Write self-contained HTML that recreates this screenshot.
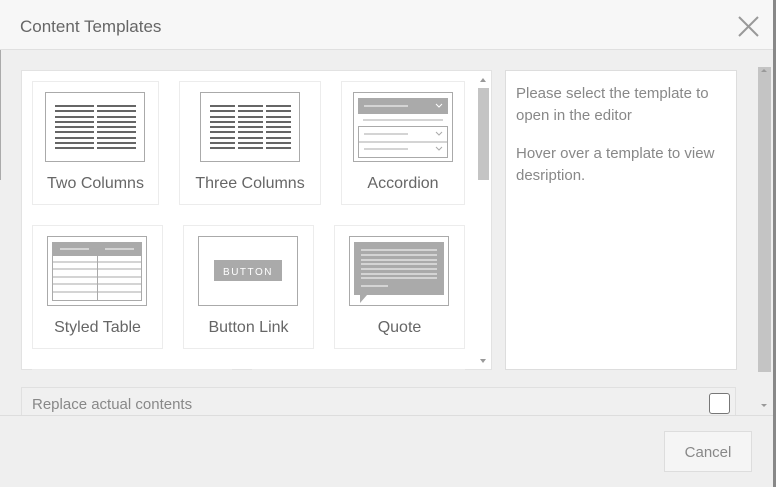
<!DOCTYPE html>
<html><head><style>
body{margin:0;width:776px;height:487px;overflow:hidden;background:#efefef;font-family:"Liberation Sans",sans-serif;position:relative}
.a{position:absolute}
.t{position:absolute;color:#666;font-size:16px;text-align:center;font-weight:300}
</style></head><body>
<div class="a" style="left:0;top:0;width:773px;height:49px;background:#f7f7f7;border-bottom:1px solid #e0e0e0"></div>
<div class="a" style="left:20px;top:17px;font-size:17px;color:#666">Content Templates</div>
<div class="a" style="left:773px;top:0;width:3px;height:487px;background:#888"></div>
<div class="a" style="left:0;top:50px;width:1px;height:130px;background:#aaa"></div>
<div class="a" style="left:21px;top:70px;width:471px;height:300px;background:#fff;border:1px solid #e2e2e2;box-sizing:border-box"></div>
<div class="a" style="left:478px;top:88px;width:11px;height:92px;background:#c4c4c4"></div>
<div class="a" style="left:505px;top:70px;width:232px;height:300px;background:#fff;border:1px solid #ddd;box-sizing:border-box"></div>
<div class="a" style="left:516px;top:83px;width:215px;font-size:15px;line-height:22px;color:#888">Please select the template to open in the editor<div style="height:16px"></div>Hover over a template to view desription.</div>
<div class="a" style="left:758px;top:67px;width:13px;height:305px;background:#c4c4c4"></div>
<div class="a" style="left:21px;top:387px;width:715px;height:28px;background:#f0f0f0;border:1px solid #e0e0e0;border-bottom:none;box-sizing:border-box"></div>
<div class="a" style="left:32px;top:396px;font-size:15px;color:#888">Replace actual contents</div>
<div class="a" style="left:709px;top:393px;width:21px;height:21px;background:#fff;border:1px solid #777;border-radius:3px;box-sizing:border-box"></div>
<div class="a" style="left:0;top:415px;width:773px;height:1px;background:#ddd"></div>
<div class="a" style="left:664px;top:431px;width:88px;height:41px;background:#f5f5f5;border:1px solid #ddd;box-sizing:border-box;text-align:center;line-height:42px;color:#888;font-size:15px">Cancel</div>
<svg class="a" style="left:0;top:0" width="776" height="487">
<g stroke="#999" stroke-width="2"><path d="M739 17L758 36M758 17L739 36"/></g>
<g fill="#999"><path d="M480 82l3-4 3 4z"/><path d="M480 359l3 4 3-4z"/><path d="M761 72l3-3 3 3z"/><path d="M761 404l3 3 3-3z"/></g>
<g fill="#fff" stroke="#ececec"><rect x="32.5" y="81.5" width="126" height="123"/><rect x="179.5" y="81.5" width="141" height="123"/><rect x="341.5" y="81.5" width="123" height="123"/><rect x="32.5" y="225.5" width="130" height="123"/><rect x="183.5" y="225.5" width="130" height="123"/><rect x="334.5" y="225.5" width="130" height="123"/><path d="M32.5 370V369.5H231.5V370M252.5 370V369.5H464.5V370"/></g>
<g fill="none" stroke="#aaa"><rect x="45.5" y="92.5" width="99" height="69"/><rect x="200.5" y="92.5" width="99" height="69"/><rect x="353.5" y="92.5" width="99" height="69"/><rect x="47.5" y="236.5" width="99" height="69"/><rect x="198.5" y="236.5" width="99" height="69"/><rect x="349.5" y="236.5" width="99" height="69"/></g>
<g stroke="#666" stroke-width="2">
<path d="M55 106H94M97 106H136M55 111H94M97 111H136M55 117H94M97 117H136M55 122H94M97 122H136M55 127H94M97 127H136M55 132H94M97 132H136M55 138H94M97 138H136M55 143H94M97 143H136M55 148H94M97 148H136"/>
<path d="M210 106H235M238 106H263M266 106H291M210 111H235M238 111H263M266 111H291M210 117H235M238 117H263M266 117H291M210 122H235M238 122H263M266 122H291M210 127H235M238 127H263M266 127H291M210 132H235M238 132H263M266 132H291M210 138H235M238 138H263M266 138H291M210 143H235M238 143H263M266 143H291M210 148H235M238 148H263M266 148H291"/>
</g>
<rect x="358" y="98" width="90" height="16" fill="#aaa"/>
<g stroke="#fff" fill="none"><path d="M364 106H408"/><path d="M436 104l3 3 3-3"/></g>
<g stroke="#aaa" fill="none"><path d="M363 120H443"/><rect x="358.5" y="126.5" width="89" height="31"/><path d="M358 142H448M364 134H408M364 149H408M436 132l3 3 3-3M436 147l3 3 3-3"/></g>
<rect x="52" y="242" width="90" height="14" fill="#aaa"/>
<g stroke="#fff"><path d="M60 249H89M105 249H134"/></g>
<g stroke="#aaa" fill="none"><path d="M52.5 256V300.5H141.5V256M52 262H142M52 269H142M52 277H142M52 284H142M52 292H142M97.5 256V300"/></g>
<rect x="214" y="260" width="68" height="21" fill="#aaa"/>
<text x="248" y="275" fill="#fff" font-size="10" text-anchor="middle" letter-spacing="1.5" font-family="Liberation Sans">BUTTON</text>
<path d="M354 242H444V295H367L360 303V295H354Z" fill="#aaa"/>
<g stroke="#fff"><path d="M361 250H437M361 255H437M361 260H437M361 264H437M361 269H437M361 274H437M361 278H437M361 286H388"/></g>
</svg>
<div class="t" style="left:32px;top:175px;width:127px">Two Columns</div>
<div class="t" style="left:179px;top:175px;width:142px">Three Columns</div>
<div class="t" style="left:341px;top:175px;width:124px">Accordion</div>
<div class="t" style="left:32px;top:319px;width:131px">Styled Table</div>
<div class="t" style="left:183px;top:319px;width:131px">Button Link</div>
<div class="t" style="left:334px;top:319px;width:131px">Quote</div>
</body></html>
